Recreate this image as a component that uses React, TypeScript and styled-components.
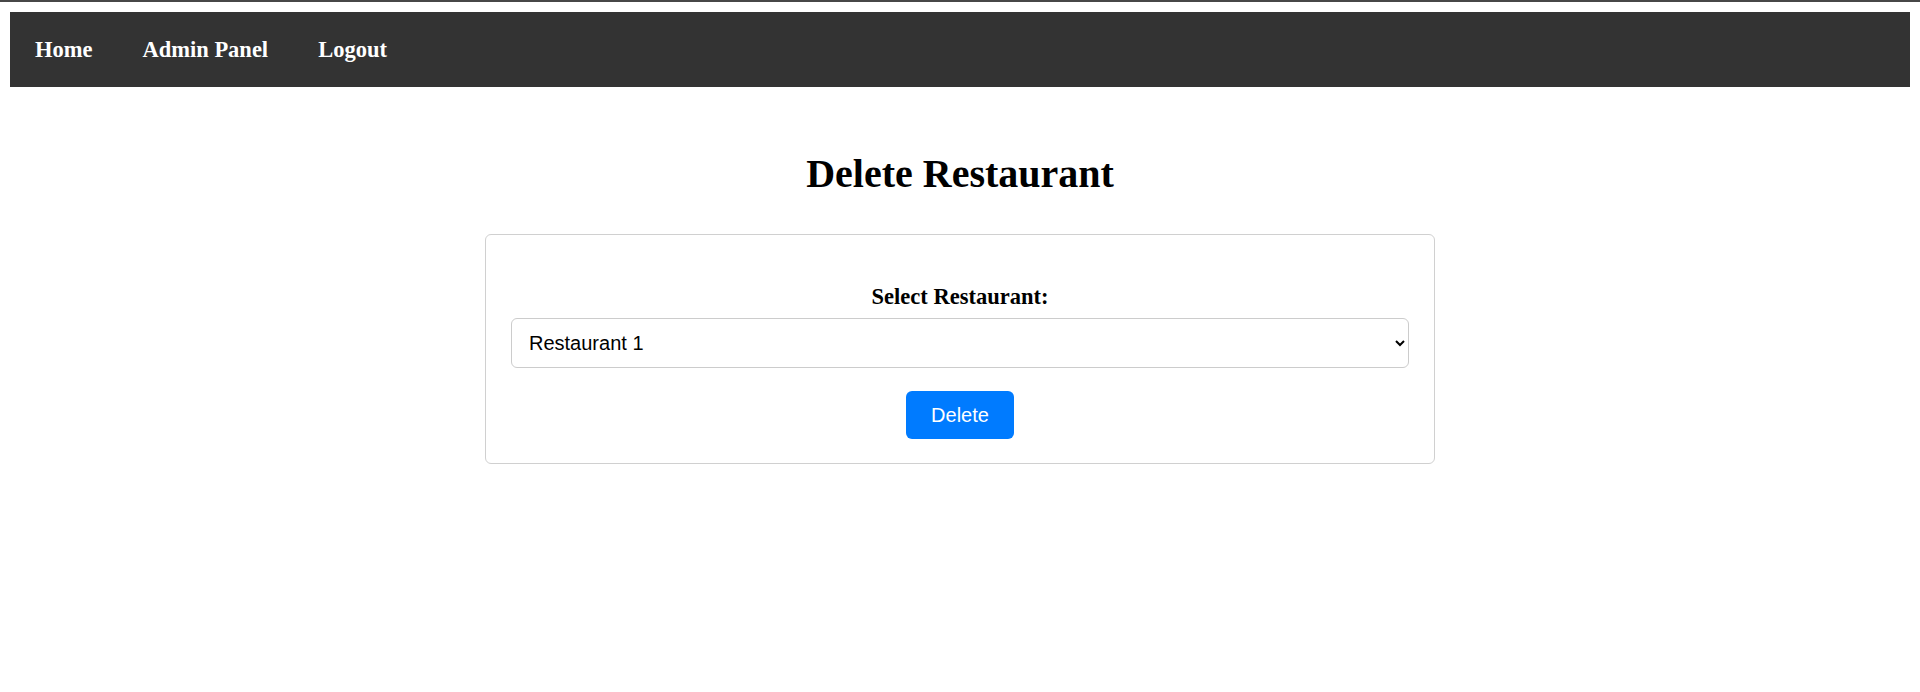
import React from "react";
import styled, { createGlobalStyle } from "styled-components";

const GlobalStyle = createGlobalStyle`
  html, body {
    margin: 0;
    padding: 0;
    background: #ffffff;
    font-family: "Liberation Serif", "Times New Roman", serif;
    color: #000000;
  }
  * { box-sizing: border-box; }
`;

const TopRule = styled.div`
  height: 2px;
  background: #474747;
`;

const Page = styled.div`
  padding: 10px;
`;

const Nav = styled.nav`
  height: 75px;
  background: #333333;
  display: flex;
  align-items: center;
  gap: 50px;
  padding: 0 25px;
`;

const NavLink = styled.a`
  color: #ffffff;
  text-decoration: none;
  font-weight: bold;
  font-size: 22.5px;
  line-height: 26px;
  cursor: pointer;
`;

const Main = styled.main`
  display: flex;
  flex-direction: column;
  align-items: center;
`;

const Title = styled.h1`
  margin: 64px 0 37px;
  font-size: 40px;
  line-height: 46px;
  font-weight: bold;
  text-align: center;
`;

const Card = styled.form`
  width: 950px;
  border: 1px solid #d0d0d0;
  border-radius: 6px;
  padding: 25px 25px 24px;
  display: flex;
  flex-direction: column;
  align-items: center;
`;

const Label = styled.label`
  margin-top: 24px;
  font-weight: bold;
  font-size: 22.5px;
  line-height: 26px;
`;

const Select = styled.select`
  align-self: stretch;
  margin-top: 7.5px;
  height: 50px;
  padding: 0 13px;
  border: 1px solid #cccccc;
  border-radius: 6px;
  background: #ffffff;
  font-family: "Liberation Sans", Arial, sans-serif;
  font-size: 20px;
  color: #000000;
`;

const Button = styled.button`
  margin-top: 23.5px;
  height: 48px;
  padding: 0 25px;
  border: none;
  border-radius: 6px;
  background: #007bff;
  color: #ffffff;
  font-family: "Liberation Sans", Arial, sans-serif;
  font-size: 20px;
  cursor: pointer;
`;

export default function App() {
  return (
    <>
      <GlobalStyle />
      <TopRule />
      <Page>
        <Nav>
          <NavLink>Home</NavLink>
          <NavLink>Admin Panel</NavLink>
          <NavLink>Logout</NavLink>
        </Nav>
        <Main>
          <Title>Delete Restaurant</Title>
          <Card onSubmit={(e) => e.preventDefault()}>
            <Label htmlFor="restaurant">Select Restaurant:</Label>
            <Select id="restaurant" defaultValue="1">
              <option value="1">Restaurant 1</option>
              <option value="2">Restaurant 2</option>
              <option value="3">Restaurant 3</option>
            </Select>
            <Button type="submit">Delete</Button>
          </Card>
        </Main>
      </Page>
    </>
  );
}
